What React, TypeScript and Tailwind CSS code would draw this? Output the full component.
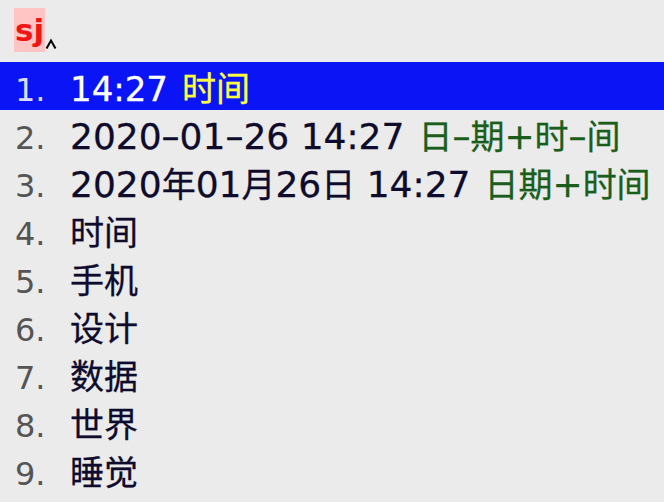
import React from "react";

const FONT = { fontFamily: '"DejaVu Sans", "Noto Sans CJK SC", sans-serif' };

type Cand = { text: string; comment?: string };

const cands: Cand[] = [
  { text: "14:27", comment: "时间" },
  { text: "2020–01–26 14:27", comment: "日–期+时–间" },
  { text: "2020年01月26日 14:27", comment: "日期+时间" },
  { text: "时间" },
  { text: "手机" },
  { text: "设计" },
  { text: "数据" },
  { text: "世界" },
  { text: "睡觉" },
];

function Runs({ s }: { s: string }) {
  const parts = s.match(/[\u3400-\u9fff]+|[^\u3400-\u9fff]+/g) || [];
  return (
    <>
      {parts.map((p, i) =>
        /[\u3400-\u9fff]/.test(p) ? (
          <span
            key={i}
            className="text-[34px]"
            style={{ fontFamily: '"Noto Sans CJK SC", sans-serif' }}
          >
            {p}
          </span>
        ) : (
          <span key={i}>{p}</span>
        )
      )}
    </>
  );
}

export default function App() {
  return (
    <div
      className="w-[664px] h-[502px] bg-[#ebebeb] overflow-hidden"
      style={FONT}
    >
      <div className="h-[62px] flex items-start pl-[14px] pt-[8px]">
        <span className="bg-[#ffc4c4] text-[#f01414] font-bold text-[31px] leading-[44px] h-[44px] pl-[1px] pr-[1px]">
          sj
        </span>
        <svg
          width="12"
          height="12"
          viewBox="0 0 12 12"
          className="mt-[30px]"
        >
          <path
            d="M1.5 10.5 L6 2.5 L10.5 10.5"
            fill="none"
            stroke="#000"
            strokeWidth="2"
          />
        </svg>
      </div>
      {cands.map((c, i) => {
        const hl = i === 0;
        return (
          <div
            key={i}
            className={
              "h-12 flex items-baseline pl-[15px] pt-[3px] leading-[44px] " +
              (hl ? "bg-[#0b14f5]" : "")
            }
          >
            <span
              className={
                "w-[55px] shrink-0 text-[32px] " +
                (hl ? "text-[#dcdcf4]" : "text-[#555555]")
              }
            >
              {i + 1}.
            </span>
            <span
              className={
                "whitespace-nowrap [-webkit-text-stroke:0.3px_currentColor] " +
                (hl ? "text-[34px] text-white" : "text-[36px] text-[#0e0b2c]")
              }
            >
              <Runs s={c.text} />
            </span>
            {c.comment && (
              <span
                className={
                  "text-[36px] whitespace-nowrap ml-[14px] [-webkit-text-stroke:0.3px_currentColor] " +
                  (hl ? "text-[#ffff3c]" : "text-[#1b5e1b]")
                }
              >
                <Runs s={c.comment} />
              </span>
            )}
          </div>
        );
      })}
    </div>
  );
}
